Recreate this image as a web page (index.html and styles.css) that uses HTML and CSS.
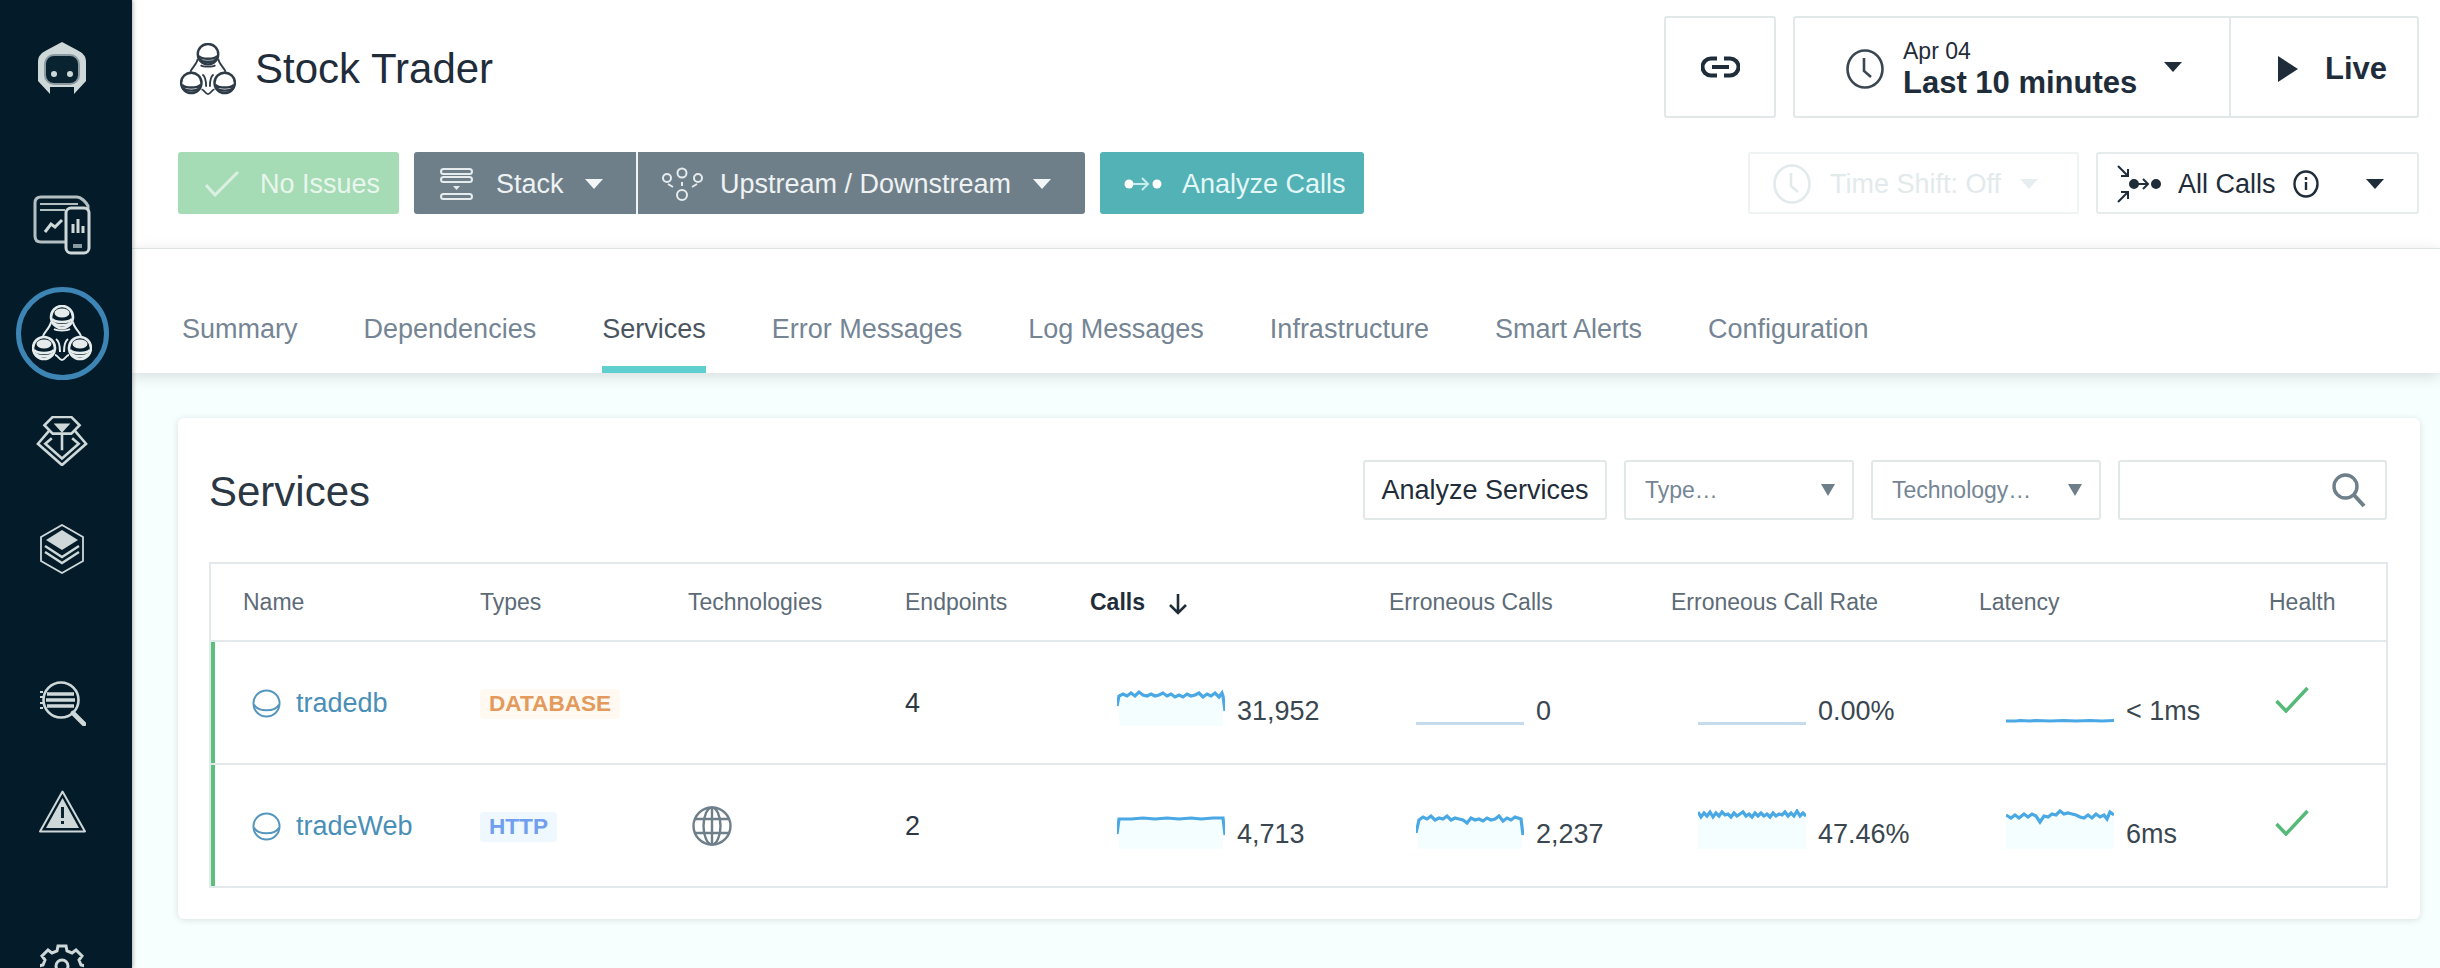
FILE: index.html
```html
<!DOCTYPE html>
<html lang="en">

<head>
    <meta charset="UTF-8">
    <title>Stock Trader - Services</title>
    <link rel="stylesheet" href="styles.css">
</head>

<body>
    <svg class="defs" width="0" height="0">
        <symbol id="appstack" viewBox="0 0 60 56">
            <g fill="none" stroke="currentColor" stroke-width="2.600">
                <circle cx="30" cy="12" r="11" />
                <circle cx="12" cy="43" r="11" />
                <circle cx="48" cy="43" r="11" />
                <path d="M19 17c-1 6-6 9-8 14M41 17c1 6 6 9 8 14M22 24c3 2 13 2 16 0M24 34c3 2 4 7 4 13M36 34c-3 2-4 7-4 13M23 50c3 0 4 5 7 5s4-5 7-5" stroke-width="2" />
            </g>
            <g class="stack-tops">
                <ellipse cx="30" cy="8" rx="7.500" ry="4.500" />
                <ellipse cx="12" cy="39" rx="7.500" ry="4.500" />
                <ellipse cx="48" cy="39" rx="7.500" ry="4.500" />
            </g>
            <g fill="none" stroke="currentColor" stroke-width="2.600">
                <path d="M20 14c3 4 17 4 20 0M21 18c4 3 14 3 18 0" />
                <path d="M2 45c3 4 17 4 20 0M3 49c4 3 14 3 18 0" />
                <path d="M38 45c3 4 17 4 20 0M39 49c4 3 14 3 18 0" />
            </g>
        </symbol>
        <symbol id="clock" viewBox="0 0 38 40">
            <g fill="none" stroke="currentColor" stroke-width="2.600">
                <ellipse cx="19" cy="20" rx="17.500" ry="18.500" />
                <path d="M18 9v13l7 6" />
            </g>
        </symbol>
        <symbol id="dbnode" viewBox="0 0 30 30">
            <g fill="none" stroke="currentColor" stroke-width="2">
                <circle cx="15" cy="15" r="13.500" />
                <path d="M2 16c4 8 22 8 26 0" />
            </g>
        </symbol>
        <symbol id="okcheck" viewBox="0 0 34 27">
            <path d="M1.500 15l9.500 10L32.500 2" fill="none" stroke="currentColor" stroke-width="3.500" />
        </symbol>
    </svg>

    <aside class="sidebar">
        <div class="side-logo">
            <svg width="52" height="54" viewBox="0 0 52 54">
                <path d="M26 1l15 8c6 3 9 6 9 12v19L38 53v-7H14v7L2 40V21c0-6 3-9 9-12z" fill="#cfd8d8" />
                <rect x="9" y="14" width="34" height="29" rx="9" fill="#0a2330" stroke="#8b9aa0" stroke-width="2" />
                <circle cx="18" cy="33" r="3" fill="#cfd8d8" />
                <circle cx="34" cy="33" r="3" fill="#cfd8d8" />
            </svg>
        </div>

        <nav class="side-group side-first">
            <a class="side-item">
                <svg width="58" height="60" viewBox="0 0 58 60" fill="none" stroke="#b4bfc2" stroke-width="3">
                    <path d="M33 47H8c-4 0-6-2-6-6V8c0-4 2-6 6-6h36c4 0 9 5 11 9v40" />
                    <path d="M7 15h25M7 9h38" stroke-width="2" />
                    <path d="M12 37l6-8 4 3 7-7" stroke="#cfd8d8" />
                    <rect x="33" y="13" width="23" height="45" rx="5" stroke="#cfd8d8" fill="#041c29" />
                    <path d="M40 38v-9M45 38V24M50 38v-7" stroke="#cfd8d8" />
                    <path d="M40 51h9" stroke="#8b9aa0" stroke-width="4" />
                </svg>
            </a>
            <a class="side-item side-active">
                <svg class="side-app" width="60" height="56">
                    <use href="#appstack" />
                </svg>
            </a>
            <a class="side-item">
                <svg width="52" height="50" viewBox="0 0 56 54" fill="none" stroke="#cfd8d8" stroke-width="2.800">
                    <path d="M18 1h20l9 9-9 9H18l-9-9z" />
                    <path d="M19 8h18l-9 10z" fill="#cfd8d8" stroke="none" />
                    <path d="M14 16L2 30l26 23 26-23-12-14" />
                    <path d="M17 24l-7 6 18 16 18-16-7-6M28 20v17" />
                </svg>
            </a>
            <a class="side-item">
                <svg width="44" height="50" viewBox="0 0 44 50" fill="none" stroke="#cfd8d8" stroke-width="1.800">
                    <path d="M22 1l21 12v24L22 49 1 37V13z" />
                    <path d="M22 6l16 10-16 10L6 16z" fill="#cfd8d8" stroke="none" />
                    <path d="M5 22l17 11 17-11M5 28l17 11 17-11" stroke-width="2.400" />
                </svg>
            </a>
        </nav>

        <nav class="side-group side-second">
            <a class="side-item">
                <svg width="47" height="45" viewBox="0 0 47 45" fill="none" stroke="#cfd8d8" stroke-width="2.600">
                    <circle cx="22" cy="19" r="17.500" />
                    <path d="M8 13h27M7 19h29M8 25h27" stroke-width="3.400" />
                    <path d="M1 11h3M1 16h3M1 22h3M1 27h3" stroke-width="2" />
                    <path d="M34 32l11 11" stroke-width="4.600" stroke-linecap="round" />
                </svg>
            </a>
            <a class="side-item">
                <svg width="47" height="43" viewBox="0 0 47 43" fill="none" stroke="#cfd8d8" stroke-width="2">
                    <path d="M23.500 1.500L46 41.500H1z" stroke-linejoin="round" />
                    <path d="M23.500 8L40 38H7z" fill="#cfd8d8" stroke="none" />
                    <path d="M23.500 17v11M23.500 31v3" stroke="#0a2330" stroke-width="3" />
                </svg>
            </a>
        </nav>

        <nav class="side-group side-third">
            <a class="side-item">
                <svg width="44" height="44" viewBox="0 0 44 44" fill="none" stroke="#cfd8d8" stroke-width="3">
                    <path d="M18 2h8l1 5 5 2 4-3 6 6-3 4 2 5 5 1v8l-5 1-2 5 3 4-6 6-4-3-5 2-1 5h-8l-1-5-5-2-4 3-6-6 3-4-2-5-5-1v-8l5-1 2-5-3-4 6-6 4 3 5-2z" />
                    <circle cx="22" cy="22" r="6" />
                </svg>
            </a>
        </nav>
    </aside>

    <main class="content">
        <header class="topbar">
            <div class="top-row">
                <h1 class="app-title">
                    <svg class="title-icon" width="56" height="52">
                        <use href="#appstack" />
                    </svg>
                    Stock Trader
                </h1>
                <div class="top-actions">
                    <button class="box-btn link-btn">
                        <svg width="39" height="22" viewBox="0 0 39 22" fill="none" stroke="#1f2d3a" stroke-width="4">
                            <path d="M16 2.500H10a8.500 8.500 0 0 0 0 17h6M23 2.500h6a8.500 8.500 0 0 1 0 17h-6M11 11h17" />
                        </svg>
                    </button>
                    <div class="time-group">
                        <div class="time-pick">
                            <svg class="time-clock" width="38" height="40">
                                <use href="#clock" />
                            </svg>
                            <div class="time-text">
                                <span class="time-date">Apr 04</span>
                                <span class="time-range">Last 10 minutes</span>
                            </div>
                            <span class="caret caret-dark"></span>
                        </div>
                        <div class="live">
                            <span class="play"></span>
                            Live
                        </div>
                    </div>
                </div>
            </div>

            <div class="action-row">
                <div class="action-left">
                    <button class="act-btn act-ok">
                        <svg width="34" height="26" viewBox="0 0 34 26" fill="none" stroke="#dcefe2" stroke-width="3">
                            <path d="M1 14l9 10L33 1" />
                        </svg>
                        No Issues
                    </button>
                    <div class="act-joined">
                        <button class="act-btn act-grey act-stack">
                            <svg width="33" height="33" viewBox="0 0 33 33" fill="none" stroke="#e6ecee" stroke-width="2">
                                <rect x="1" y="1" width="31" height="5" rx="2.500" />
                                <rect x="1" y="9" width="31" height="5" rx="2.500" />
                                <rect x="1" y="26" width="31" height="5" rx="2.500" />
                                <path d="M13 18h7l-3.500 4z" fill="#e6ecee" stroke="none" />
                            </svg>
                            Stack
                            <span class="caret"></span>
                        </button>
                        <button class="act-btn act-grey act-flow">
                            <svg width="41" height="34" viewBox="0 0 41 34" fill="none" stroke="#e6ecee" stroke-width="2">
                                <circle cx="5" cy="11" r="4" />
                                <circle cx="20" cy="6" r="4.500" />
                                <circle cx="36" cy="11" r="4" />
                                <circle cx="20" cy="28" r="5" />
                                <path d="M6 17l5 3M35 17l-5 3M20 15v4" />
                            </svg>
                            Upstream / Downstream
                            <span class="caret"></span>
                        </button>
                    </div>
                    <button class="act-btn act-teal">
                        <svg width="38" height="16" viewBox="0 0 38 16">
                            <circle cx="5" cy="8" r="4.500" fill="#fff" />
                            <circle cx="33" cy="8" r="4.500" fill="#fff" />
                            <path d="M9 8h14M18 2l6 6-6 6" fill="none" stroke="#c8eeee" stroke-width="2" />
                        </svg>
                        Analyze Calls
                    </button>
                </div>
                <div class="action-right">
                    <div class="plain-select shift-select">
                        <svg width="38" height="40">
                            <use href="#clock" />
                        </svg>
                        <span>Time Shift: Off</span>
                        <span class="caret caret-faint"></span>
                    </div>
                    <div class="plain-select calls-select">
                        <svg width="44" height="38" viewBox="0 0 44 38" fill="none" stroke="#1f2d3a" stroke-width="2">
                            <path d="M1 1l10 10M4 11h7V4M1 37l10-10M4 27h7v7" />
                            <circle cx="17" cy="19" r="4" fill="#1f2d3a" />
                            <circle cx="39" cy="19" r="4" fill="#1f2d3a" />
                            <path d="M21 19h9M26 14l5 5-5 5" />
                        </svg>
                        <span class="calls-label">All Calls</span>
                        <svg class="info-icon" width="26" height="30" viewBox="0 0 26 30" fill="none" stroke="#1f2d3a" stroke-width="2.400">
                            <ellipse cx="13" cy="15" rx="11.500" ry="12.500" />
                            <path d="M13 13v8M13 8v3" />
                        </svg>
                        <span class="caret caret-dark"></span>
                    </div>
                </div>
            </div>
        </header>

        <nav class="tabs">
            <a class="tab">Summary</a>
            <a class="tab">Dependencies</a>
            <a class="tab tab-active">Services</a>
            <a class="tab">Error Messages</a>
            <a class="tab">Log Messages</a>
            <a class="tab">Infrastructure</a>
            <a class="tab">Smart Alerts</a>
            <a class="tab">Configuration</a>
        </nav>

        <section class="card">
            <div class="card-head">
                <h2 class="card-title">Services</h2>
                <div class="card-tools">
                    <button class="tool-btn">Analyze Services</button>
                    <div class="tool-select">Type…<span class="tri"></span></div>
                    <div class="tool-select">Technology…<span class="tri"></span></div>
                    <div class="tool-search">
                        <svg width="34" height="35" viewBox="0 0 34 35" fill="none" stroke="#6f7f8a" stroke-width="3.400">
                            <circle cx="13.500" cy="13.500" r="11.500" />
                            <path d="M22 22l10 11" stroke-width="4" />
                        </svg>
                    </div>
                </div>
            </div>

            <table class="services">
                <colgroup>
                    <col class="c-name">
                    <col class="c-types">
                    <col class="c-tech">
                    <col class="c-ends">
                    <col class="c-calls">
                    <col class="c-err">
                    <col class="c-rate">
                    <col class="c-lat">
                    <col class="c-health">
                </colgroup>
                <thead>
                    <tr>
                        <th>Name</th>
                        <th>Types</th>
                        <th>Technologies</th>
                        <th>Endpoints</th>
                        <th class="sorted">Calls
                            <svg width="20" height="22" viewBox="0 0 20 22" fill="none" stroke="#1f2d3a" stroke-width="2.600">
                                <path d="M10 1v19M2 12l8 8 8-8" />
                            </svg>
                        </th>
                        <th>Erroneous Calls</th>
                        <th>Erroneous Call Rate</th>
                        <th>Latency</th>
                        <th>Health</th>
                    </tr>
                </thead>
                <tbody>
                    <tr>
                        <td class="name-cell">
                            <a class="svc-name">
                                <svg width="29" height="29">
                                    <use href="#dbnode" />
                                </svg>
                                tradedb
                            </a>
                        </td>
                        <td><span class="badge badge-db">DATABASE</span></td>
                        <td></td>
                        <td class="ends">4</td>
                        <td>
                            <div class="metric">
                                <svg class="spark" viewBox="0 0 108 40">
                                    <path class="spark-fill" d="M2 10H106V40H2z" />
                                    <polyline class="spark-line" points="0,20 2,10 6,8 10,10 14,7 18,10 22,6 26,9 30,10 34,8 38,10 42,9 46,7 50,10 54,8 58,11 62,9 66,11 70,8 74,10 78,9 82,7 86,11 90,8 94,10 98,7 102,11 105,7 106,10 108,25" />
                                </svg>
                                <span>31,952</span>
                            </div>
                        </td>
                        <td>
                            <div class="metric">
                                <svg class="spark" viewBox="0 0 108 40">
                                    <polyline class="spark-line spark-pale" points="0,37.500 108,37.500" />
                                </svg>
                                <span>0</span>
                            </div>
                        </td>
                        <td>
                            <div class="metric">
                                <svg class="spark" viewBox="0 0 108 40">
                                    <polyline class="spark-line spark-pale" points="0,37.500 108,37.500" />
                                </svg>
                                <span>0.00%</span>
                            </div>
                        </td>
                        <td>
                            <div class="metric">
                                <svg class="spark" viewBox="0 0 108 40">
                                    <polyline class="spark-line" points="0,35 10,35 14,34.500 24,35 30,34.500 44,35 58,34.500 70,35 84,34.500 96,35 108,34.500" />
                                </svg>
                                <span>&lt; 1ms</span>
                            </div>
                        </td>
                        <td>
                            <svg class="ok" width="34" height="27">
                                <use href="#okcheck" />
                            </svg>
                        </td>
                    </tr>
                    <tr>
                        <td class="name-cell">
                            <a class="svc-name">
                                <svg width="29" height="29">
                                    <use href="#dbnode" />
                                </svg>
                                tradeWeb
                            </a>
                        </td>
                        <td><span class="badge badge-http">HTTP</span></td>
                        <td>
                            <svg class="globe" width="40" height="40" viewBox="0 0 40 40" fill="none" stroke="#6f7f8a" stroke-width="2.400">
                                <circle cx="20" cy="20" r="18.500" />
                                <ellipse cx="20" cy="20" rx="8.500" ry="18.500" />
                                <path d="M20 1.500v37M3 13h34M3 27h34" />
                            </svg>
                        </td>
                        <td class="ends">2</td>
                        <td>
                            <div class="metric">
                                <svg class="spark" viewBox="0 0 108 40">
                                    <path class="spark-fill" d="M2 10H106V40H2z" />
                                    <polyline class="spark-line" points="0,25 2,10 14,10 26,9 38,10 50,9 62,10 74,9 84,10 96,9 106,9 108,26" />
                                </svg>
                                <span>4,713</span>
                            </div>
                        </td>
                        <td>
                            <div class="metric">
                                <svg class="spark" viewBox="0 0 108 40">
                                    <path class="spark-fill" d="M2 10H106V40H2z" />
                                    <polyline class="spark-line" points="0,24 3,11 7,8 11,10 15,7 19,11 23,9 27,10 31,7 35,11 39,9 43,10 47,11 51,14 55,9 59,11 63,10 67,12 71,9 75,11 79,10 83,7 87,12 91,9 95,11 99,8 105,10 107,26" />
                                </svg>
                                <span>2,237</span>
                            </div>
                        </td>
                        <td>
                            <div class="metric">
                                <svg class="spark" viewBox="0 0 108 40">
                                    <path class="spark-fill" d="M0 6H108V40H0z" />
                                    <polyline class="spark-line" points="0,3 3,8 6,4 9,7 12,3 15,8 18,4 21,7 24,3 27,6 30,5 33,8 36,4 39,7 42,5 45,3 48,7 51,5 54,8 57,4 60,7 63,4 66,7 69,5 72,8 75,4 78,7 81,5 84,6 87,3 90,7 93,4 96,7 99,2 102,7 105,4 108,7" />
                                </svg>
                                <span>47.46%</span>
                            </div>
                        </td>
                        <td>
                            <div class="metric">
                                <svg class="spark" viewBox="0 0 108 40">
                                    <path class="spark-fill" d="M0 6H108V40H0z" />
                                    <polyline class="spark-line" points="0,6 5,9 9,6 13,9 18,5 22,8 26,5 30,7 34,13 38,7 42,8 46,5 50,6 54,2 58,5 62,4 66,5 70,6 74,8 78,9 82,6 86,9 90,5 94,8 98,6 101,10 104,3 108,6" />
                                </svg>
                                <span>6ms</span>
                            </div>
                        </td>
                        <td>
                            <svg class="ok" width="34" height="27">
                                <use href="#okcheck" />
                            </svg>
                        </td>
                    </tr>
                </tbody>
            </table>
        </section>
    </main>
</body>

</html>
```

FILE: styles.css
```css
html,
body {
    height: 100%;
}

body {
    display: flex;
    margin: 0;
    overflow: hidden;
    font-family: "Liberation Sans", Arial, sans-serif;
    font-size: 27px;
    color: #2b3743;
    background-color: #f7fefe;
}

button {
    font-family: inherit;
    font-size: inherit;
    color: inherit;
    cursor: pointer;
}

.defs {
    position: absolute;
}

.stack-tops {
    fill: var(--stack-top, none);
}

/* left bar */
.sidebar {
    flex: 0 0 124px;
    height: 968px;
    padding-right: 8px;
    overflow: hidden;
    background-color: #041c29;
    box-shadow: 1px 0 4px rgba(0, 0, 0, 0.3);
    z-index: 2;
}

.side-logo {
    display: flex;
    align-items: center;
    justify-content: center;
    height: 136px;
}

.side-first {
    margin-top: 35px;
}

.side-second {
    margin-top: 46px;
}

.side-third {
    margin-top: 47px;
}

.side-item {
    display: flex;
    align-items: center;
    justify-content: center;
    height: 108px;
}

.side-app {
    --stack-top: #e6ecec;
    color: #e6ecec;
}

.side-active {
    position: relative;
}

.side-active::before {
    content: "";
    position: absolute;
    left: 16px;
    top: 8px;
    width: 83px;
    height: 83px;
    border: 5px solid #3d85b5;
    border-radius: 50%;
}

/* header */
.content {
    flex: 1;
    min-width: 0;
}

.topbar {
    padding: 16px 21px 34px 46px;
    background-color: #fff;
    border-bottom: 1px solid #e6ebeb;
}

.top-row {
    display: flex;
    justify-content: space-between;
    height: 102px;
}

.app-title {
    display: flex;
    align-items: center;
    gap: 19px;
    margin: 0;
    padding-top: 3px;
    font-size: 42px;
    font-weight: normal;
    color: #1f2d3a;
}

.title-icon {
    margin-left: 2px;
    color: #2f3c47;
}

.top-actions {
    display: flex;
    gap: 17px;
}

.box-btn {
    width: 112px;
    padding: 4px 0 0;
    background-color: #fff;
    border: 2px solid #e2e8e8;
    border-radius: 3px;
}

.time-group {
    display: flex;
    width: 626px;
    border: 2px solid #e2e8e8;
    border-radius: 3px;
    color: #1f2d3a;
    box-sizing: border-box;
}

.time-pick {
    display: flex;
    align-items: center;
    width: 436px;
    padding: 4px 0 0 51px;
    box-sizing: border-box;
    border-right: 2px solid #e2e8e8;
}

.time-clock {
    color: #3a4752;
    margin-right: 19px;
}

.time-text {
    display: flex;
    flex-direction: column;
    padding-top: 2px;
}

.time-date {
    font-size: 23px;
    line-height: 26px;
}

.time-range {
    font-size: 31px;
    font-weight: bold;
    line-height: 38px;
}

.time-pick .caret {
    margin: 0 0 4px 27px;
}

.live {
    display: flex;
    align-items: center;
    gap: 27px;
    padding: 4px 0 0 47px;
    font-size: 31px;
    font-weight: bold;
}

.play {
    width: 0;
    height: 0;
    border-left: 20px solid #1f2d3a;
    border-top: 13px solid transparent;
    border-bottom: 13px solid transparent;
}

.caret {
    display: inline-block;
    width: 0;
    height: 0;
    border-left: 9.500px solid transparent;
    border-right: 9.500px solid transparent;
    border-top: 10px solid #f2f6f7;
}

.caret-dark {
    border-top-color: #1f2d3a;
}

.caret-faint {
    border-top-color: #e6eef0;
}

/* action buttons */
.action-row {
    display: flex;
    justify-content: space-between;
    margin-top: 34px;
    height: 62px;
}

.action-left {
    display: flex;
}

.action-right {
    display: flex;
    gap: 17px;
}

.act-btn {
    display: flex;
    align-items: center;
    height: 62px;
    border: none;
    border-radius: 3px;
    color: #fff;
}

.act-ok {
    width: 221px;
    padding: 2px 0 0 27px;
    gap: 21px;
    background-color: #a5dcb5;
    color: #e9f6ed;
}

.act-joined {
    display: flex;
    margin-left: 15px;
}

.act-grey {
    background-color: #6f7f8a;
    color: #eef2f3;
}

.act-stack {
    width: 224px;
    padding: 2px 0 0 26px;
    gap: 23px;
    border-radius: 3px 0 0 3px;
    border-right: 2px solid #f0f3f4;
}

.act-stack .caret {
    margin-left: -2px;
}

.act-flow {
    width: 447px;
    padding: 2px 0 0 24px;
    gap: 17px;
    border-radius: 0 3px 3px 0;
}

.act-flow .caret {
    margin-left: 5px;
}

.act-teal {
    width: 264px;
    margin-left: 15px;
    padding: 2px 0 0 24px;
    gap: 20px;
    background-color: #52b2b6;
    color: #e4f7f7;
}

.plain-select {
    display: flex;
    align-items: center;
    height: 62px;
    padding-top: 2px;
    box-sizing: border-box;
    background-color: #fff;
    border: 2px solid #e6ebeb;
    border-radius: 3px;
}

.shift-select {
    width: 331px;
    padding-left: 23px;
    gap: 19px;
    color: #e2eaec;
    border-color: #f0f3f3;
}

.calls-select {
    width: 323px;
    padding-left: 19px;
    color: #1f2d3a;
}

.calls-label {
    margin-left: 17px;
}

.info-icon {
    margin-left: 17px;
}

.calls-select .caret {
    margin-left: 47px;
}

/* tabs */
.tabs {
    position: relative;
    display: flex;
    gap: 66px;
    padding-left: 50px;
    background-color: #fff;
    box-shadow: 0 3px 14px rgba(0, 0, 0, 0.14);
}

.tab {
    padding: 65px 0 22px;
    line-height: 30px;
    border-bottom: 7px solid transparent;
    color: #758594;
}

.tab-active {
    color: #4a5560;
    border-bottom-color: #5fd0cf;
}

/* services card */
.card {
    margin: 45px 20px 0 46px;
    padding: 42px 33px 31px 31px;
    background-color: #fff;
    border-radius: 6px;
    box-shadow: 0 1px 7px rgba(0, 0, 0, 0.12);
}

.card-head {
    display: flex;
    align-items: center;
    justify-content: space-between;
    height: 60px;
    margin-bottom: 42px;
}

.card-title {
    margin: 0;
    padding-top: 3px;
    font-size: 42px;
    font-weight: normal;
    color: #2b3743;
}

.card-tools {
    display: flex;
    gap: 17px;
}

.tool-btn,
.tool-select,
.tool-search {
    height: 60px;
    box-sizing: border-box;
    background-color: #fff;
    border: 2px solid #e2e8e8;
    border-radius: 3px;
}

.tool-btn {
    width: 244px;
    padding: 0;
    color: #1f2d3a;
}

.tool-select {
    display: flex;
    align-items: center;
    justify-content: space-between;
    width: 230px;
    padding: 0 17px 0 19px;
    font-size: 23px;
    color: #758594;
}

.tri {
    width: 0;
    height: 0;
    border-left: 7px solid transparent;
    border-right: 7px solid transparent;
    border-top: 12px solid #6f7f8a;
}

.tool-search {
    display: flex;
    align-items: center;
    justify-content: flex-end;
    width: 269px;
    padding-right: 19px;
}

/* table */
.services {
    width: 2177px;
    table-layout: fixed;
    border-collapse: collapse;
    border: 2px solid #e3e9ea;
}

.c-name {
    width: 238px;
}

.c-types {
    width: 208px;
}

.c-tech {
    width: 217px;
}

.c-ends {
    width: 185px;
}

.c-calls {
    width: 299px;
}

.c-err {
    width: 282px;
}

.c-rate {
    width: 308px;
}

.c-lat {
    width: 290px;
}

.c-health {
    width: 150px;
}

.services th {
    height: 76px;
    padding: 0 0 0 32px;
    font-size: 23px;
    font-weight: normal;
    text-align: left;
    color: #5d6b77;
}

.services th.sorted {
    font-weight: bold;
    color: #1f2d3a;
}

.sorted svg {
    margin-left: 17px;
    vertical-align: -5px;
}

.services td {
    height: 121px;
    padding: 0 0 0 32px;
    border-top: 2px solid #e3e9ea;
}

.services td.name-cell {
    padding-top: 2px;
    height: 119px;
    box-shadow: inset 4px 0 0 #5cbf7c;
}

.svc-name {
    display: flex;
    align-items: center;
    gap: 15px;
    padding-left: 9px;
    color: #4a8fb8;
}

.svc-name svg {
    color: #5596bd;
}

.badge {
    display: inline-block;
    padding: 0 9px;
    font-size: 22.600px;
    font-weight: bold;
    line-height: 30px;
    border-radius: 4px;
}

.badge-db {
    color: #e39a5c;
    background-color: #fff9f1;
}

.badge-http {
    color: #6f9fee;
    background-color: #eff8ff;
}

.globe {
    display: block;
    margin-left: 4px;
}

.services td.ends {
    padding-top: 2px;
    height: 119px;
    color: #2b3743;
}

.metric {
    display: flex;
    align-items: flex-end;
    gap: 12px;
    height: 46px;
    padding-left: 27px;
    line-height: 30px;
    color: #3a4650;
}

.spark {
    flex: 0 0 108px;
    height: 40px;
}

.spark-fill {
    fill: #f5feff;
}

.spark-line {
    fill: none;
    stroke: #4aa8e4;
    stroke-width: 3.200;
}

.spark-pale {
    stroke: #c5dcee;
}

.ok {
    display: block;
    margin: -7px 0 0 6px;
    color: #55b978;
}
```
